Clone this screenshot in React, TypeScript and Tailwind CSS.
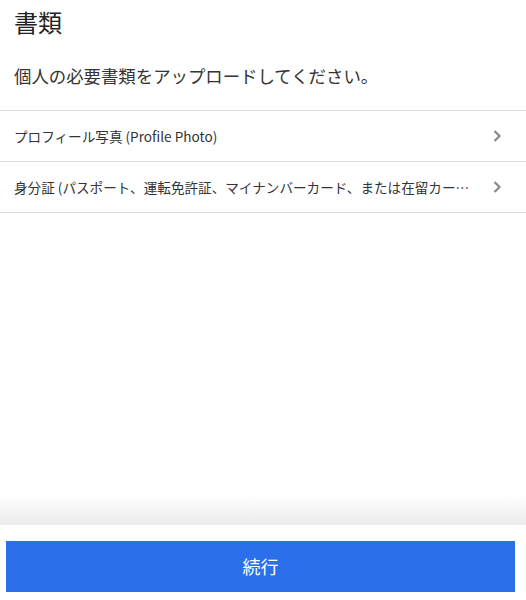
const font = { fontFamily: '"Noto Sans CJK JP", "Noto Sans", sans-serif' }

function Chevron() {
  return (
    <svg width="10" height="14" viewBox="0 0 10 14" className="shrink-0 text-[#8a8a8a]">
      <path d="M2.5 2 L7.5 7 L2.5 12" fill="none" stroke="currentColor" strokeWidth="2.2" />
    </svg>
  )
}

const docs = [
  "プロフィール写真 (Profile Photo)",
  "身分証 (パスポート、運転免許証、マイナンバーカード、または在留カード)",
]

export default function App() {
  return (
    <div className="flex h-[600px] w-[526px] flex-col bg-white text-[#333]" style={font}>
      <div className="flex-1">
        <h1 className="px-[14px] pt-[4px] text-[24px] leading-[36px] font-normal text-[#222]">書類</h1>
        <p className="mt-[22px] px-[14px] text-[17.4px] leading-[28px] text-[#333]">
          個人の必要書類をアップロードしてください。
        </p>
        <div className="mt-[20px] border-t border-[#dcdcdc]">
          {docs.map((d) => (
            <div
              key={d}
              className="flex h-[51px] items-center gap-[22px] border-b border-[#dcdcdc] pr-[24px] pl-[14px]"
            >
              <span className="min-w-0 flex-1 truncate text-[13.6px] text-[#333]">{d}</span>
              <Chevron />
            </div>
          ))}
        </div>
      </div>
      <div className="h-[30px] bg-gradient-to-b from-white to-[#ebebeb]" />
      <div className="bg-white px-[6px] pt-[16px] pb-[8px]">
        <button className="flex h-[51px] w-[509px] items-center justify-center bg-[#2b6fea] text-[18px] text-white">
          続行
        </button>
      </div>
    </div>
  )
}
